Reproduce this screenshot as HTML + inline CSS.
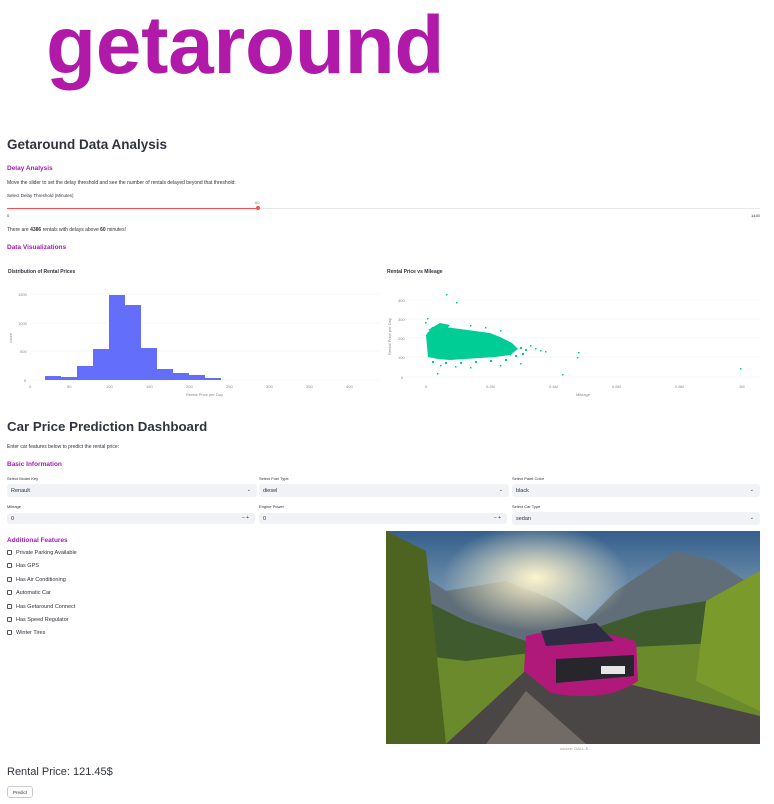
<!DOCTYPE html>
<html><head><meta charset="utf-8"><style>
*{margin:0;padding:0;box-sizing:border-box}
body{width:774px;height:804px;background:#fff;position:relative;overflow:hidden;font-family:"Liberation Sans",sans-serif;color:#31333f}
.a{position:absolute;white-space:nowrap}
.h{color:#a21caf;font-weight:bold;font-size:6.5px}
.s{font-size:5px;color:#31333f}
.sel{position:absolute;height:13px;background:#f0f2f6;border-radius:3px;font-size:5.5px;padding:4px 4px;color:#31333f}
.sel i{position:absolute;right:6px;top:3px;font-style:normal;font-size:5px}
.cb{position:absolute;left:7px;font-size:5.5px;color:#31333f}
.cb b{display:inline-block;width:5px;height:5px;border:0.7px solid #555;border-radius:1px;margin-right:4px;vertical-align:middle}
.t{font-size:4px;fill:#888}
</style></head><body>
<div class="a" style="left:46px;top:5px;font-size:82px;line-height:1;font-weight:bold;letter-spacing:-0.3px;color:#b11aa9">getaround</div>
<div class="a" style="left:7px;top:137px;font-size:13.5px;font-weight:bold">Getaround Data Analysis</div>
<div class="a h" style="left:7px;top:165px">Delay Analysis</div>
<div class="a s" style="left:7px;top:180px">Move the slider to set the delay threshold and see the number of rentals delayed beyond that threshold:</div>
<div class="a s" style="left:7px;top:193px;font-size:4.5px">Select Delay Threshold (Minutes)</div>
<div class="a" style="left:255px;top:200px;font-size:4px;color:#ff4b4b">60</div>
<div class="a" style="left:7px;top:207.5px;width:753px;height:1.2px;background:#e6e8ee"></div>
<div class="a" style="left:7px;top:207.5px;width:251px;height:1.2px;background:#ff4b4b"></div>
<div class="a" style="left:256px;top:206px;width:4px;height:4px;border-radius:50%;background:#ff4b4b"></div>
<div class="a s" style="left:7px;top:213px;font-size:4px">0</div>
<div class="a s" style="left:751px;top:213px;font-size:4px">1440</div>
<div class="a s" style="left:7px;top:227px">There are <b>4386</b> rentals with delays above <b>60</b> minutes!</div>
<div class="a h" style="left:7px;top:244px">Data Visualizations</div>
<div class="a" style="left:8px;top:269px;font-size:5px;font-weight:bold">Distribution of Rental Prices</div>
<div class="a" style="left:387px;top:269px;font-size:5px;font-weight:bold">Rental Price vs Mileage</div>
<svg class="a" style="left:0;top:285px" width="774" height="115">
<g stroke="#eef0f4" stroke-width="0.6"><line x1="30" x2="381" y1="9" y2="9"/><line x1="30" x2="381" y1="38" y2="38"/><line x1="30" x2="381" y1="66" y2="66"/><line x1="30" x2="381" y1="95" y2="95"/>
<line x1="406" x2="760" y1="15" y2="15"/><line x1="406" x2="760" y1="34" y2="34"/><line x1="406" x2="760" y1="53" y2="53"/><line x1="406" x2="760" y1="72" y2="72"/><line x1="406" x2="760" y1="92" y2="92"/></g>
<g fill="#636efa"><rect x="45" y="91" width="16" height="4"/><rect x="61" y="92" width="16" height="3"/><rect x="77" y="81" width="16" height="14"/><rect x="93" y="64" width="16" height="31"/><rect x="109" y="10" width="16" height="85"/><rect x="125" y="20" width="16" height="75"/><rect x="141" y="63" width="16" height="32"/><rect x="157" y="84" width="16" height="11"/><rect x="173" y="88" width="16" height="7"/><rect x="189" y="90" width="16" height="5"/><rect x="205" y="93" width="16" height="2"/></g>
<g class="t"><text x="18" y="11">1500</text><text x="18" y="40">1000</text><text x="20" y="68">500</text><text x="24" y="97">0</text>
<text x="29" y="103">0</text><text x="67" y="103">50</text><text x="106" y="103">100</text><text x="146" y="103">150</text><text x="186" y="103">200</text><text x="226" y="103">250</text><text x="266" y="103">300</text><text x="306" y="103">350</text><text x="346" y="103">400</text>
<text x="186" y="111">Rental Price per Day</text>
<text x="398" y="17">400</text><text x="398" y="36">300</text><text x="398" y="55">200</text><text x="398" y="74">100</text><text x="401" y="94">0</text>
<text x="425" y="103">0</text><text x="486" y="103">0.2M</text><text x="549" y="103">0.4M</text><text x="612" y="103">0.6M</text><text x="675" y="103">0.8M</text><text x="739" y="103">1M</text><text x="576" y="111">Mileage</text></g>
<text class="t" transform="translate(12,58) rotate(-90)">count</text>
<text class="t" transform="translate(391,70) rotate(-90)">Rental Price per Day</text>
<g fill="#00cc96">
<path d="M426 50 L432 42 L445 42 L460 44 L475 46 L490 48 L500 52 L512 58 L518 64 L510 70 L495 72 L480 73 L465 74 L450 75 L438 74 L428 72 Z"/>
<path d="M428 45 L440 38 L450 40 L445 46Z"/>
<rect x="446" y="9" width="1.5" height="1.5"/><rect x="456" y="17" width="1.5" height="1.5"/><rect x="427" y="33" width="1.5" height="1.5"/><rect x="425" y="37" width="1.5" height="1.5"/>
<rect x="520" y="62" width="2" height="2"/><rect x="525" y="64" width="2" height="2"/><rect x="530" y="60" width="1.5" height="1.5"/><rect x="522" y="68" width="2" height="2"/><rect x="515" y="70" width="2" height="2"/><rect x="505" y="74" width="2" height="2"/><rect x="490" y="75" width="2" height="2"/><rect x="475" y="76" width="2" height="2"/><rect x="460" y="77" width="2" height="2"/><rect x="445" y="77" width="2" height="2"/><rect x="432" y="76" width="2" height="2"/><rect x="500" y="45" width="1.5" height="1.5"/><rect x="485" y="42" width="1.5" height="1.5"/><rect x="470" y="40" width="1.5" height="1.5"/>
<rect x="535" y="63" width="1.5" height="1.5"/><rect x="540" y="65" width="1.5" height="1.5"/><rect x="545" y="66" width="1.5" height="1.5"/><rect x="577" y="72" width="1.5" height="1.5"/><rect x="578" y="67" width="1.5" height="1.5"/><rect x="562" y="89" width="1.5" height="1.5"/><rect x="740" y="83" width="1.5" height="1.5"/><rect x="440" y="80" width="1.5" height="1.5"/><rect x="455" y="81" width="1.5" height="1.5"/><rect x="470" y="82" width="1.5" height="1.5"/><rect x="500" y="80" width="1.5" height="1.5"/><rect x="437" y="88" width="1.5" height="1.5"/><rect x="520" y="78" width="1.5" height="1.5"/><rect x="510" y="69" width="1.5" height="1.5"/></g>
</svg>
<div class="a" style="left:7px;top:419px;font-size:13.3px;font-weight:bold">Car Price Prediction Dashboard</div>
<div class="a s" style="left:7px;top:444px">Enter car features below to predict the rental price:</div>
<div class="a h" style="left:7px;top:461px">Basic Information</div>
<div class="a s" style="left:7px;top:476px;font-size:4px">Select Model Key</div>
<div class="a s" style="left:259px;top:476px;font-size:4px">Select Fuel Type</div>
<div class="a s" style="left:512px;top:476px;font-size:4px">Select Paint Color</div>
<div class="sel" style="left:7px;top:484px;width:250px">Renault<i>⌄</i></div>
<div class="sel" style="left:259px;top:484px;width:250px">diesel<i>⌄</i></div>
<div class="sel" style="left:512px;top:484px;width:248px">black<i>⌄</i></div>
<div class="a s" style="left:7px;top:504px;font-size:4px">Mileage</div>
<div class="a s" style="left:259px;top:504px;font-size:4px">Engine Power</div>
<div class="a s" style="left:512px;top:504px;font-size:4px">Select Car Type</div>
<div class="sel" style="left:7px;top:513px;width:248px;height:11px;padding-top:3px">0<i style="top:2px">– +</i></div>
<div class="sel" style="left:259px;top:513px;width:248px;height:11px;padding-top:3px">0<i style="top:2px">– +</i></div>
<div class="sel" style="left:512px;top:512px;width:248px">sedan<i>⌄</i></div>
<div class="a h" style="left:7px;top:537px">Additional Features</div>
<div class="cb" style="top:550px"><b></b>Private Parking Available</div>
<div class="cb" style="top:563px"><b></b>Has GPS</div>
<div class="cb" style="top:577px"><b></b>Has Air Conditioning</div>
<div class="cb" style="top:590px"><b></b>Automatic Car</div>
<div class="cb" style="top:604px"><b></b>Has Getaround Connect</div>
<div class="cb" style="top:617px"><b></b>Has Speed Regulator</div>
<div class="cb" style="top:630px"><b></b>Winter Tires</div>
<svg class="a" style="left:386px;top:531px" width="374" height="213" viewBox="0 0 374 213">
<defs><linearGradient id="sky" x1="0" y1="0" x2="0" y2="1"><stop offset="0" stop-color="#345f8c"/><stop offset="0.5" stop-color="#9fb6c6"/></linearGradient>
<radialGradient id="sun" cx="0.4" cy="0.22" r="0.25"><stop offset="0" stop-color="#fff4cc"/><stop offset="1" stop-color="#fff4cc" stop-opacity="0"/></radialGradient></defs>
<rect width="374" height="213" fill="url(#sky)"/>
<path d="M0 20 L60 60 L120 50 L170 70 L200 90 L230 60 L260 40 L290 20 L330 30 L374 60 L374 213 L0 213Z" fill="#5f6e78"/>
<path d="M0 50 L80 90 L140 110 L200 100 L260 80 L320 70 L374 90 L374 213 L0 213Z" fill="#3f5a2c"/>
<path d="M0 120 L80 130 L160 120 L374 110 L374 213 L0 213Z" fill="#6a8a2c"/>
<path d="M0 0 L40 20 L60 213 L0 213Z" fill="#4d6420"/>
<path d="M320 70 L374 40 L374 180 L310 150Z" fill="#7a9a2c"/>
<rect width="374" height="213" fill="url(#sun)"/>
<path d="M60 213 L150 130 L160 110 L175 110 L170 130 L230 150 L374 185 L374 213Z" fill="#4a4646"/>
<path d="M100 213 L140 160 L200 213Z" fill="#9a8f84" opacity="0.5"/>
<path d="M140 105 Q190 92 250 110 L252 150 Q220 172 165 162 L138 140Z" fill="#b0187a"/>
<path d="M155 100 L210 92 L228 110 L160 115Z" fill="#2e2c44"/>
<path d="M170 128 L248 124 L248 145 L170 152Z" fill="#26262c"/>
<rect x="215" y="135" width="24" height="8" fill="#e6e6e6"/>
</svg>
<div class="a" style="left:560px;top:746px;font-size:4px;color:#999">source: DALL-E</div>
<div class="a" style="left:7px;top:766px;font-size:11px">Rental Price: 121.45$</div>
<div class="a" style="left:7px;top:786px;width:26px;height:12px;border:0.8px solid #ccc;border-radius:3px;font-size:4.5px;text-align:center;line-height:11px">Predict</div>
</body></html>
